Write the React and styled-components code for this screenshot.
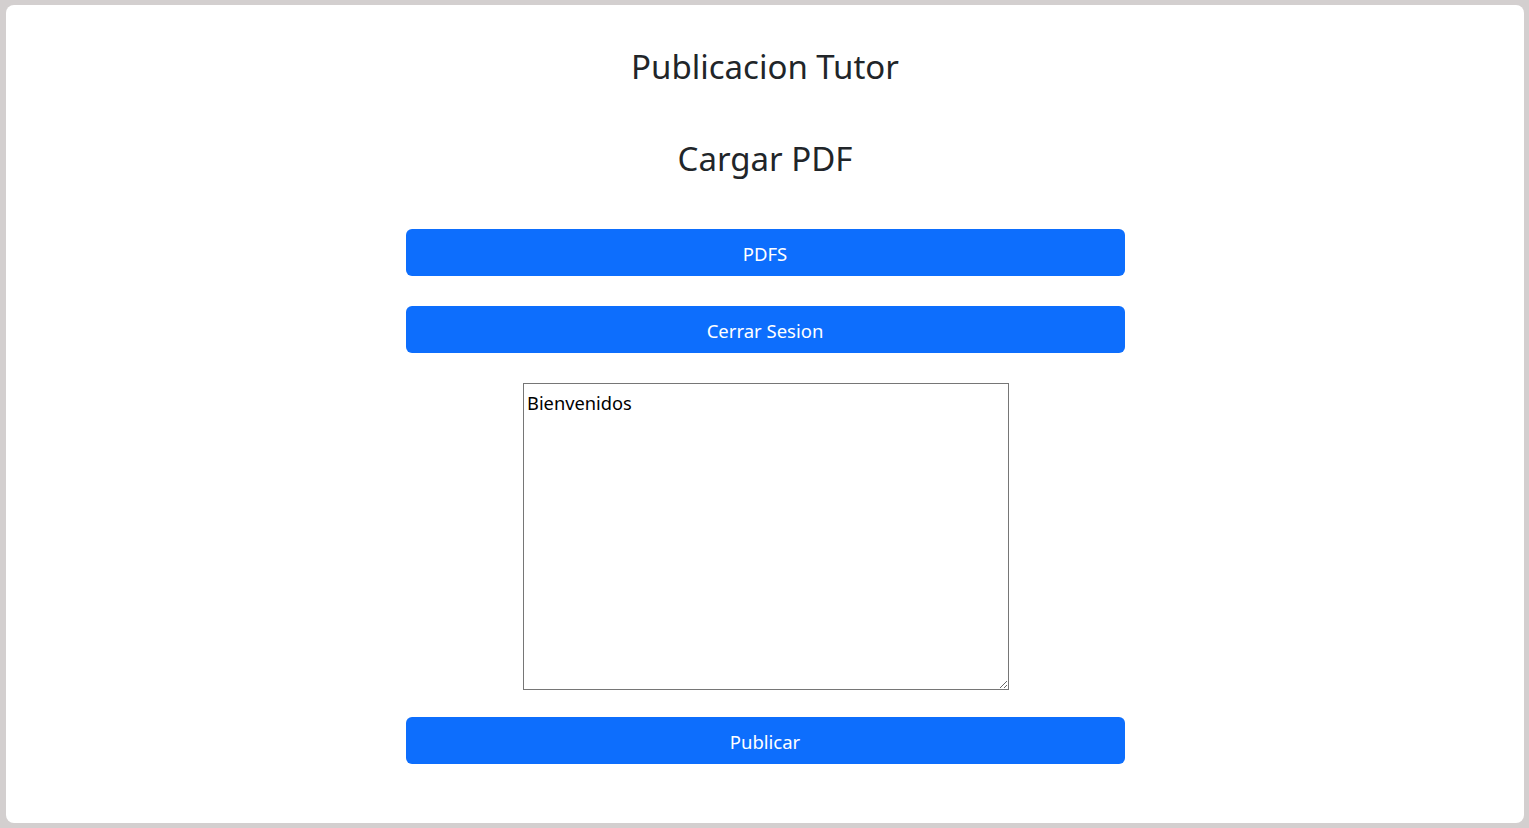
import React from "react";
import styled, { createGlobalStyle } from "styled-components";

const Global = createGlobalStyle`
  * { box-sizing: border-box; }
  body {
    margin: 0;
    background: #d3cfcf;
    font-family: "Noto Sans", "Open Sans", sans-serif;
    color: #212529;
  }
`;

const Page = styled.div`
  padding: 5px 5px 5px 6px;
  height: 828px;
`;

const Card = styled.main`
  background: #ffffff;
  border-radius: 8px;
  height: 818px;
  padding-top: 43px;
  display: flex;
  flex-direction: column;
  align-items: center;
`;

const Title = styled.h2`
  margin: 0 0 ${(p) => p.$gap}px;
  font-size: 33px;
  font-weight: 400;
  line-height: 38px;
  text-align: center;
`;

const Actions = styled.div`
  width: 719px;
  display: flex;
  flex-direction: column;
  align-items: center;
  gap: 30px;
`;

const Button = styled.button`
  width: 100%;
  height: 47px;
  border: none;
  border-radius: 6px;
  background: #0d6efd;
  color: #ffffff;
  font-family: inherit;
  font-size: 18.5px;
  padding-top: 2px;
  cursor: pointer;
`;

const Mensaje = styled.textarea`
  width: 486px;
  height: 307px;
  border: 1px solid #767676;
  padding: 6px 3px 2px;
  font-family: "Noto Sans", sans-serif;
  font-size: 18.3px;
  color: #000;
  resize: both;
  margin: 0 0 -3px 2px;
`;

export default function App() {
  return (
    <Page>
      <Global />
      <Card>
        <Title $gap={54}>Publicacion Tutor</Title>
        <Title $gap={51}>Cargar PDF</Title>
        <Actions>
          <Button>PDFS</Button>
          <Button>Cerrar Sesion</Button>
          <Mensaje defaultValue="Bienvenidos" />
          <Button>Publicar</Button>
        </Actions>
      </Card>
    </Page>
  );
}
